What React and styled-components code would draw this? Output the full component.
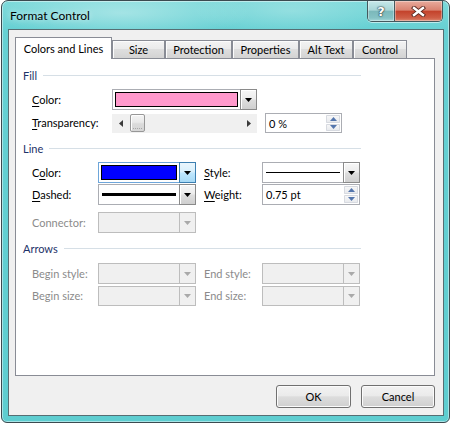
import React from "react";
import styled, { createGlobalStyle, css } from "styled-components";

const GlobalStyle = createGlobalStyle`
  html, body { margin: 0; padding: 0; background: #ffffff; }
  body {
    font-family: Lato, "Noto Sans", sans-serif;
    font-size: 11px;
    color: #000;
  }
  #root { width: 453px; height: 427px; }
`;

const Window = styled.div`
  box-sizing: border-box;
  width: 449px;
  height: 423px;
  margin-left: 1px;
  border: 1px solid #3b4a50;
  border-radius: 7px 7px 6px 6px;
  background:
    radial-gradient(ellipse 130px 26px at 120px 12px, rgba(255, 255, 255, 0.35), transparent),
    radial-gradient(ellipse 100px 24px at 290px 10px, rgba(255, 255, 255, 0.22), transparent),
    linear-gradient(180deg, #7cd9da 0%, #66d0d3 30px, #5ecdd0 100%);
  box-shadow: inset 0 0 0 1px rgba(255, 255, 255, 0.45);
  display: flex;
  flex-direction: column;
`;

const TitleBar = styled.div`
  height: 28px;
  display: flex;
  align-items: flex-start;
`;

const Title = styled.div`
  margin: 7px 0 0 8px;
  font-size: 12px;
  line-height: 16px;
  color: #000;
  text-shadow: 0 0 6px rgba(255, 255, 255, 0.8);
`;

const CaptionButtons = styled.div`
  margin-left: auto;
  margin-right: 6px;
  height: 20px;
  display: flex;
  border: 1px solid #44595e;
  border-top: none;
  border-radius: 0 0 5px 5px;
  overflow: hidden;
  box-shadow: 0 1px 0 rgba(255, 255, 255, 0.55);
`;

const CaptionButton = styled.div`
  box-sizing: border-box;
  width: ${(p) => p.$w}px;
  display: flex;
  align-items: center;
  justify-content: center;
  box-shadow: inset 0 0 0 1px rgba(255, 255, 255, 0.35);
  ${(p) =>
    p.$close
      ? css`
          background: linear-gradient(180deg, #e8ab9d 0%, #d98371 45%, #c4432c 52%, #cf5f47 85%, #dd8a72 100%);
        `
      : css`
          border-right: 1px solid #44595e;
          background: linear-gradient(180deg, #c6e8e9 0%, #a9d6d7 45%, #7cb9bb 52%, #86c3c5 85%, #a6d8d9 100%);
        `}
`;

const HelpGlyph = styled.span`
  font-family: "DejaVu Sans", sans-serif;
  font-weight: bold;
  font-size: 13px;
  line-height: 13px;
  color: #fff;
  text-shadow: 0 0 1px #2c3e42, 0 0 1px #2c3e42, 0 0 2px #2c3e42;
`;

const Client = styled.div`
  flex: 1;
  margin: 0 5px 6px 6px;
  border: 1px solid #566e73;
  background: #f0f0f0;
  padding: 7px 8px 7px 6px;
  display: flex;
  flex-direction: column;
`;

const TabStrip = styled.div`
  height: 21px;
  display: flex;
  align-items: flex-end;
`;

const Tab = styled.div`
  box-sizing: border-box;
  width: ${(p) => p.$w}px;
  border: 1px solid #898c95;
  border-bottom: none;
  display: flex;
  align-items: center;
  justify-content: center;
  font-size: 11px;
  white-space: nowrap;
  ${(p) =>
    p.$active
      ? css`
          height: 22px;
          margin-bottom: -1px;
          position: relative;
          z-index: 1;
          background: #ffffff;
        `
      : css`
          height: 18px;
          background: linear-gradient(180deg, #f3f3f3 0%, #ebebeb 45%, #dedede 50%, #d3d3d3 100%);
          box-shadow: inset 1px 1px 0 #fcfcfc;
        `}
`;

const Panel = styled.div`
  box-sizing: border-box;
  height: 318px;
  border: 1px solid #898c95;
  background: #ffffff;
  padding: 9px 73px 0 7px;
`;

const SectionHeader = styled.div`
  height: 15px;
  margin-top: ${(p) => p.$mt || 0}px;
  display: flex;
  align-items: center;
  color: #1d3269;
  font-size: 11px;
  &::after {
    content: "";
    flex: 1;
    height: 1px;
    margin: -1px 0 0 6px;
    background: #d6dfe6;
  }
`;

const Row = styled.div`
  margin: ${(p) => p.$mt}px 0 0 9px;
  height: ${(p) => p.$h}px;
  display: grid;
  grid-template-columns: ${(p) => p.$cols};
  align-items: center;
`;

const Label = styled.div`
  font-size: 11px;
  line-height: 14px;
  white-space: nowrap;
  color: ${(p) => (p.$disabled ? "#8b8b8b" : "#000")};
  padding-left: ${(p) => p.$indent || 0}px;
`;

const Key = styled.span`
  text-decoration: underline;
  text-underline-offset: 2px;
`;

const Combo = styled.div`
  box-sizing: border-box;
  height: ${(p) => p.$h}px;
  display: flex;
  border: 1px solid ${(p) => (p.$focus ? "#6ea6da" : p.$disabled ? "#bdbdbd" : "#abadb3")};
  background: ${(p) => (p.$disabled ? "#f0f0f0" : "#ffffff")};
`;

const ComboField = styled.div`
  flex: 1;
  padding: 2px;
  display: flex;
  align-items: center;
`;

const Swatch = styled.div`
  box-sizing: border-box;
  flex: 1;
  align-self: stretch;
  border: 1px solid #000;
  background: ${(p) => p.$color};
`;

const LineSample = styled.div`
  flex: 1;
  height: ${(p) => p.$thick}px;
  margin: 0 1px;
  background: #000;
`;

const DropButton = styled.div`
  box-sizing: border-box;
  width: 17px;
  margin: -1px -1px -1px 0;
  display: flex;
  align-items: center;
  justify-content: center;
  ${(p) =>
    p.$focus
      ? css`
          border: 1px solid #3c7fb1;
          background: linear-gradient(180deg, #eaf6fd 0%, #d9f0fc 45%, #bee6fd 55%, #a7d9f5 100%);
        `
      : p.$disabled
      ? css`
          border: 1px solid #bdbdbd;
          background: #f0f0f0;
        `
      : css`
          border: 1px solid #8a8a8a;
          background: linear-gradient(180deg, #f7f7f7 0%, #ececec 45%, #dddddd 55%, #cfcfcf 100%);
          box-shadow: inset 1px 1px 0 #ffffff;
        `}
`;

const Spin = styled.div`
  box-sizing: border-box;
  height: ${(p) => p.$h}px;
  margin-left: ${(p) => p.$ml || 0}px;
  border: 1px solid #abadb3;
  background: #ffffff;
  display: flex;
`;

const SpinText = styled.div`
  flex: 1;
  padding-left: 3px;
  display: flex;
  align-items: center;
  font-size: 11px;
`;

const SpinButtons = styled.div`
  width: 14px;
  padding: 1px 1px 1px 0;
  display: flex;
  flex-direction: column;
  gap: 1px;
`;

const SpinBtn = styled.div`
  flex: 1;
  display: flex;
  align-items: center;
  justify-content: center;
  border-radius: 1px;
  background: linear-gradient(180deg, #f9f9f9 0%, #e6e8ec 100%);
  box-shadow: inset 0 0 0 1px #d7dae0;
`;

const Slider = styled.div`
  height: 19px;
  background: #f0f0f0;
  display: flex;
  align-items: center;
`;

const SliderArrow = styled.div`
  width: 17px;
  align-self: stretch;
  display: flex;
  align-items: center;
  justify-content: center;
`;

const SliderTrack = styled.div`
  flex: 1;
  align-self: stretch;
  display: flex;
  align-items: center;
`;

const Thumb = styled.div`
  box-sizing: border-box;
  width: 15px;
  height: 18px;
  margin-left: 1px;
  border: 1px solid #979797;
  border-radius: 2px;
  background: linear-gradient(180deg, #f4f4f4 0%, #e9e9e9 45%, #dbdbdb 55%, #d6d6d6 100%);
  box-shadow: inset 1px 1px 0 #fdfdfd;
  display: flex;
  align-items: flex-end;
  justify-content: center;
  &::after {
    content: "";
    width: 9px;
    height: 2px;
    margin-bottom: 2px;
    border-bottom: 1px dotted #a8a8a8;
  }
`;

const ButtonRow = styled.div`
  margin-top: 9px;
  display: flex;
  justify-content: flex-end;
  gap: 10px;
`;

const DialogButton = styled.button`
  box-sizing: border-box;
  width: ${(p) => p.$w}px;
  height: 23px;
  padding: 0;
  border: 1px solid #707070;
  border-radius: 3px;
  background: linear-gradient(180deg, #f2f2f2 0%, #ebebeb 45%, #dddddd 52%, #cfcfcf 100%);
  box-shadow: inset 0 0 0 1px #fbfbfb;
  font-family: inherit;
  font-size: 11px;
  color: #000;
`;

const DownArrow = ({ color = "#000" }) => (
  <svg width="7" height="4" viewBox="0 0 7 4">
    <polygon points="0,0 7,0 3.5,4" fill={color} />
  </svg>
);

const SpinArrow = ({ up }) => (
  <svg width="7" height="4" viewBox="0 0 7 4">
    <polygon points={up ? "0,4 7,4 3.5,0" : "0,0 7,0 3.5,4"} fill="#5476ad" />
  </svg>
);

const SideArrow = ({ right }) => (
  <svg width="4" height="7" viewBox="0 0 4 7">
    <polygon points={right ? "0,0 4,3.5 0,7" : "4,0 0,3.5 4,7"} fill="#3a3a3a" />
  </svg>
);

const CloseGlyph = () => (
  <svg width="15" height="11" viewBox="0 0 15 11">
    <g strokeLinecap="square">
      <line x1="3" y1="2" x2="12" y2="9" stroke="#5a2a22" strokeWidth="4.2" />
      <line x1="12" y1="2" x2="3" y2="9" stroke="#5a2a22" strokeWidth="4.2" />
      <line x1="3" y1="2" x2="12" y2="9" stroke="#ffffff" strokeWidth="2.4" />
      <line x1="12" y1="2" x2="3" y2="9" stroke="#ffffff" strokeWidth="2.4" />
    </g>
  </svg>
);

const ComboBox = ({ h = 21, focus, disabled, children }) => (
  <Combo $h={h} $focus={focus} $disabled={disabled}>
    <ComboField>{children}</ComboField>
    <DropButton $focus={focus} $disabled={disabled}>
      <DownArrow color={disabled ? "#a9a9a9" : "#000"} />
    </DropButton>
  </Combo>
);

const SpinBox = ({ h = 20, ml, value }) => (
  <Spin $h={h} $ml={ml}>
    <SpinText>{value}</SpinText>
    <SpinButtons>
      <SpinBtn>
        <SpinArrow up />
      </SpinBtn>
      <SpinBtn>
        <SpinArrow />
      </SpinBtn>
    </SpinButtons>
  </Spin>
);

const tabs = [
  { label: "Colors and Lines", w: 97, active: true },
  { label: "Size", w: 53 },
  { label: "Protection", w: 67 },
  { label: "Properties", w: 67 },
  { label: "Alt Text", w: 54 },
  { label: "Control", w: 54 },
];

const fillCols = "80px 145px 85px";
const lineCols = "66px 98px 66px 98px";

export default function App() {
  return (
    <>
      <GlobalStyle />
      <Window>
        <TitleBar>
          <Title>Format Control</Title>
          <CaptionButtons>
            <CaptionButton $w={27}>
              <HelpGlyph>?</HelpGlyph>
            </CaptionButton>
            <CaptionButton $w={47} $close>
              <CloseGlyph />
            </CaptionButton>
          </CaptionButtons>
        </TitleBar>
        <Client>
          <TabStrip>
            {tabs.map((t) => (
              <Tab key={t.label} $w={t.w} $active={t.active}>
                {t.label}
              </Tab>
            ))}
          </TabStrip>
          <Panel>
            <SectionHeader>Fill</SectionHeader>
            <Row $mt={6} $h={21} $cols={fillCols}>
              <Label>
                <Key>C</Key>olor:
              </Label>
              <ComboBox>
                <Swatch $color="#ff99cc" />
              </ComboBox>
            </Row>
            <Row $mt={3} $h={20} $cols={fillCols}>
              <Label>
                <Key>T</Key>ransparency:
              </Label>
              <Slider>
                <SliderArrow>
                  <SideArrow />
                </SliderArrow>
                <SliderTrack>
                  <Thumb />
                </SliderTrack>
                <SliderArrow>
                  <SideArrow right />
                </SliderArrow>
              </Slider>
              <SpinBox ml={8} value="0 %" />
            </Row>

            <SectionHeader $mt={8}>Line</SectionHeader>
            <Row $mt={6} $h={21} $cols={lineCols}>
              <Label>
                C<Key>o</Key>lor:
              </Label>
              <ComboBox focus>
                <Swatch $color="#0000ff" />
              </ComboBox>
              <Label $indent={8}>
                <Key>S</Key>tyle:
              </Label>
              <ComboBox>
                <LineSample $thick={1} />
              </ComboBox>
            </Row>
            <Row $mt={1} $h={21} $cols={lineCols}>
              <Label>
                <Key>D</Key>ashed:
              </Label>
              <ComboBox>
                <LineSample $thick={3} />
              </ComboBox>
              <Label $indent={8}>
                <Key>W</Key>eight:
              </Label>
              <SpinBox h={21} value="0.75 pt" />
            </Row>
            <Row $mt={7} $h={21} $cols={lineCols}>
              <Label $disabled>Connector:</Label>
              <ComboBox disabled />
            </Row>

            <SectionHeader $mt={8}>Arrows</SectionHeader>
            <Row $mt={7} $h={21} $cols={lineCols}>
              <Label $disabled>Begin style:</Label>
              <ComboBox disabled />
              <Label $disabled $indent={8}>
                End style:
              </Label>
              <ComboBox disabled />
            </Row>
            <Row $mt={1} $h={21} $cols={lineCols}>
              <Label $disabled>Begin size:</Label>
              <ComboBox disabled h={20} />
              <Label $disabled $indent={8}>
                End size:
              </Label>
              <ComboBox disabled h={20} />
            </Row>
          </Panel>
          <ButtonRow>
            <DialogButton $w={75}>OK</DialogButton>
            <DialogButton $w={74}>Cancel</DialogButton>
          </ButtonRow>
        </Client>
      </Window>
    </>
  );
}
